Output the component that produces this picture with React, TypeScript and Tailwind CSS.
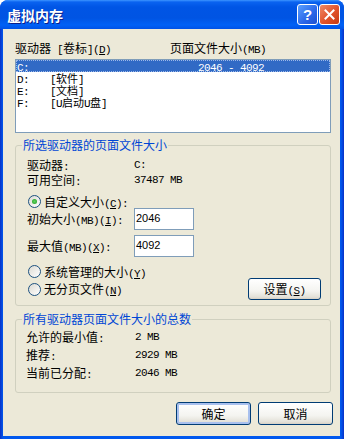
import React from "react";

// SimSun-like mix: CJK at 12px, ASCII runs in mono squeezed to 6px per char
function mn(p: string) {
  const bits = p.split(/&(.)/);
  return bits.map((b, i) => (i % 2 === 1 ? <u key={i} className="underline-offset-[1px]">{b}</u> : b));
}

function T({ s, cjk = "text-[12px]" }: { s: string; cjk?: string }) {
  const parts = s.match(/[\x20-\x7e]+|[^\x20-\x7e]+/g) ?? [];
  return (
    <span className="inline-flex items-baseline h-[12px] leading-[12px] overflow-visible">
      {parts.map((p, i) =>
        /^[\x20-\x7e]/.test(p) ? (
          <span key={i} className="font-['Liberation_Mono',monospace] text-[11px] tracking-[-0.6px] leading-[12px] whitespace-pre">
            {mn(p)}
          </span>
        ) : (
          <span key={i} className={`${cjk} leading-[12px]`}>
            {p}
          </span>
        )
      )}
    </span>
  );
}

function Radio({ on }: { on?: boolean }) {
  return (
    <span className="w-[13px] h-[13px] shrink-0 rounded-full border border-[#1c5180] bg-[linear-gradient(135deg,#dcdad2,#ffffff)] flex items-center justify-center">
      {on && <span className="w-[5px] h-[5px] rounded-full bg-[radial-gradient(circle,#5fd35f,#1f9b1f)]" />}
    </span>
  );
}

function Btn({ label, def }: { label: string; def?: boolean }) {
  return (
    <button
      type="button"
      className={`w-[75px] h-[23px] rounded-[3px] border border-[#003c74] bg-[linear-gradient(180deg,#ffffff_0%,#f4f4f0_60%,#e3e1d8_90%,#d6d0c5_100%)] flex items-center justify-center leading-[12px] ${
        def ? "shadow-[inset_0_0_0_2px_#a8c0ee]" : ""
      }`}
    >
      <T s={label} />
    </button>
  );
}

export default function App() {
  const drives = [
    { d: "C:", l: "", s: "2046 - 4092", sel: true },
    { d: "D:", l: "[软件]", s: "" },
    { d: "E:", l: "[文档]", s: "" },
    { d: "F:", l: "[U启动U盘]", s: "" },
  ];

  return (
    <div className="w-[344px] h-[439px] flex flex-col rounded-t-[8px] bg-[linear-gradient(90deg,#0a31c6,#0058ee_3px,#0058ee_calc(100%-3px),#0a31c6)] font-['Noto_Sans_CJK_SC','Noto_Sans_CJK_JP',sans-serif] text-[12px] leading-[12px] text-black">
      {/* title bar */}
      <div className="h-[29px] shrink-0 flex items-center pl-[7px] pr-[4px] rounded-t-[8px] bg-[linear-gradient(180deg,#3d95ff_0px,#0a63f0_2px,#0055e5_7px,#0054e3_18px,#0061f6_25px,#0052e6_29px)]">
        <span className="flex-1 text-white font-bold text-[14px] leading-[14px] [text-shadow:1px_1px_0_#0b1f8a]">
          虚拟内存
        </span>
        <div className="flex gap-[1px]">
          <span className="w-[21px] h-[21px] rounded-[3px] border border-white bg-[linear-gradient(135deg,#5aa0ff,#2a66e8_60%,#1b4fd0)] flex items-center justify-center text-white font-bold text-[15px] leading-[15px] font-['Liberation_Sans',sans-serif]">
            ?
          </span>
          <span className="w-[21px] h-[21px] rounded-[3px] border border-white bg-[linear-gradient(135deg,#f08a66,#e0522a_55%,#c63a14)] flex items-center justify-center">
            <svg width="11" height="11" viewBox="0 0 11 11">
              <path d="M1.5 1.5 L9.5 9.5 M9.5 1.5 L1.5 9.5" stroke="#fff" strokeWidth="2" strokeLinecap="square" />
            </svg>
          </span>
        </div>
      </div>

      {/* body */}
      <div className="flex-1 ml-[3px] mr-[4px] mb-[3px] bg-[#ece9d8] flex flex-col pl-[12px] pr-[9px]">
        <div className="mt-[13px] h-[12px] flex">
          <div className="w-[155px]">
            <T s="驱动器 [卷标](&D)" />
          </div>
          <div>
            <T s="页面文件大小(MB)" />
          </div>
        </div>

        <div className="mt-[5px] h-[74px] border border-[#7f9db9] bg-white flex flex-col">
          {drives.map((r) => (
            <div
              key={r.d}
              className={`h-[12px] shrink-0 grid grid-cols-[33px_148px_1fr] pl-[1px] ${
                r.sel ? "bg-[#316ac5] text-white outline outline-1 outline-dotted outline-offset-[-1px] outline-[#9cb8e8]" : ""
              }`}
            >
              <span className="h-[12px]">
                <T s={r.d} />
              </span>
              <span className="h-[12px]">
                <T s={r.l} cjk="text-[11px]" />
              </span>
              <span className="h-[12px]">
                <T s={r.s} />
              </span>
            </div>
          ))}
        </div>

        {/* group 1 */}
        <div className="relative mt-[12px] border border-[#d0d0bf] rounded-[3px] flex flex-col pb-[5px]">
          <span className="absolute left-[6px] top-[-7px] px-[1px] bg-[#ece9d8] text-[#0046d5] h-[12px] leading-[12px]">
            所选驱动器的页面文件大小
          </span>
          <div className="mt-[13px] pl-[11px] h-[12px] flex">
            <span className="w-[107px]">
              <T s="驱动器:" />
            </span>
            <T s="C:" />
          </div>
          <div className="mt-[3px] pl-[11px] h-[12px] flex">
            <span className="w-[107px]">
              <T s="可用空间:" />
            </span>
            <T s="37487 MB" />
          </div>
          <div className="mt-[9px] pl-[12px] h-[13px] flex items-center gap-[3px]">
            <Radio on />
            <T s="自定义大小(&C):" />
          </div>
          <div className="pl-[11px] h-[22px] flex items-center">
            <span className="w-[107px] h-[12px]">
              <T s="初始大小(MB)(&I):" />
            </span>
            <span className="w-[60px] h-[22px] border border-[#7f9db9] bg-white pl-[1px] pt-[3px] font-['Liberation_Sans',sans-serif] text-[11px] leading-[13px]">
              2046
            </span>
          </div>
          <div className="mt-[5px] pl-[11px] h-[22px] flex items-center">
            <span className="w-[107px] h-[12px]">
              <T s="最大值(MB)(&X):" />
            </span>
            <span className="w-[60px] h-[22px] border border-[#7f9db9] bg-white pl-[1px] pt-[3px] font-['Liberation_Sans',sans-serif] text-[11px] leading-[13px]">
              4092
            </span>
          </div>
          <div className="mt-[8px] pl-[12px] h-[13px] flex items-center gap-[3px]">
            <Radio />
            <T s="系统管理的大小(&Y)" />
          </div>
          <div className="pl-[12px] h-[22px] flex items-center gap-[3px] pr-[9px]">
            <Radio />
            <span className="flex-1 h-[12px]">
              <T s="无分页文件(&N)" />
            </span>
            <button
              type="button"
              className="w-[73px] h-[22px] rounded-[3px] border border-[#003c74] bg-[linear-gradient(180deg,#ffffff_0%,#f4f4f0_60%,#e3e1d8_90%,#d6d0c5_100%)] flex items-center justify-center leading-[12px]"
            >
              <T s="设置(&S)" />
            </button>
          </div>
        </div>

        {/* group 2 */}
        <div className="relative mt-[13px] border border-[#d0d0bf] rounded-[3px] flex flex-col pt-[11px] pb-[13px] pl-[10px] gap-[6px]">
          <span className="absolute left-[6px] top-[-7px] px-[1px] bg-[#ece9d8] text-[#0046d5] h-[12px] leading-[12px]">
            所有驱动器页面文件大小的总数
          </span>
          {[
            ["允许的最小值:", "2 MB"],
            ["推荐:", "2929 MB"],
            ["当前已分配:", "2046 MB"],
          ].map(([a, b]) => (
            <div key={a} className="flex h-[12px]">
              <span className="w-[109px]">
                <T s={a} />
              </span>
              <T s={b} />
            </div>
          ))}
        </div>

        <div className="mt-[9px] -mr-[2px] flex justify-end gap-[7px]">
          <Btn label="确定" def />
          <Btn label="取消" />
        </div>
      </div>
    </div>
  );
}
